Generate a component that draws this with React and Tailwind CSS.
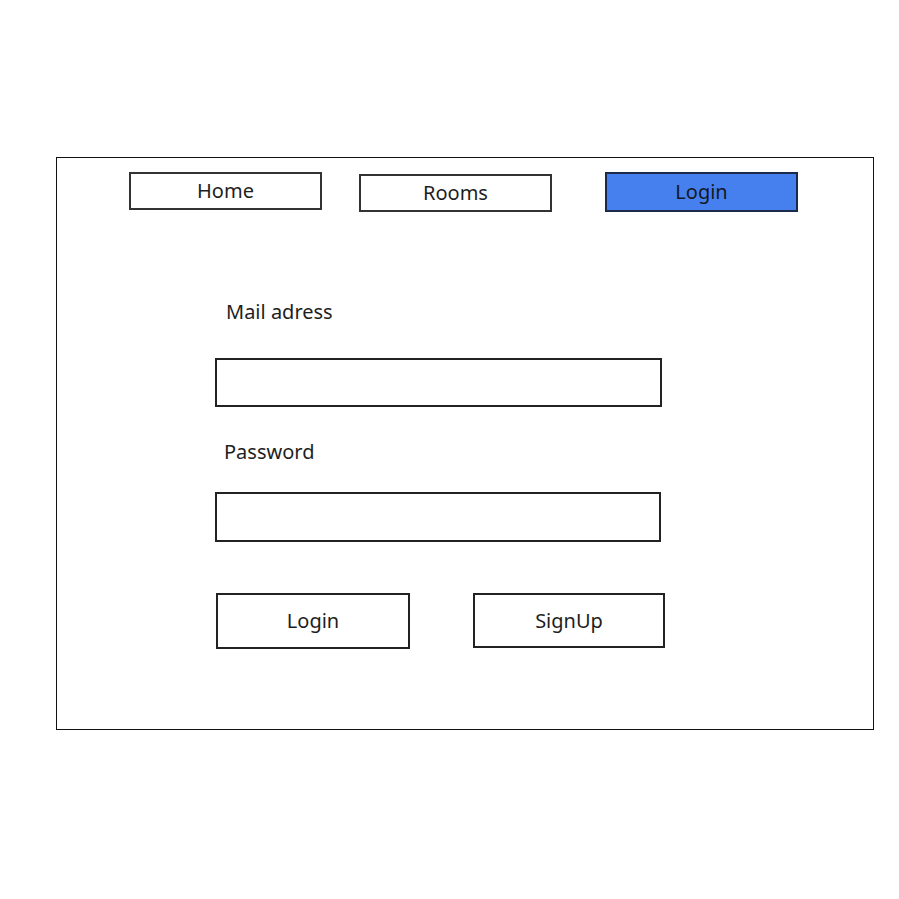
export default function App() {
  return (
    <div className="w-[899px] h-[899px] bg-white text-[#1e1e1e]" style={{ fontFamily: '"Noto Sans", "Open Sans", sans-serif' }}>
      <div className="pt-[157px] pl-[56px]">
        <div className="w-[818px] h-[573px] border border-[#111] flex flex-col">
          {/* NAV */}
          <div className="flex items-start pl-[72px] pt-[14px]">
            <div className="w-[193px] h-[38px] border-2 border-[#333] flex items-center justify-center text-[20px]">
              Home
            </div>
            <div className="ml-[37px] mt-[2px] w-[193px] h-[38px] border-2 border-[#333] flex items-center justify-center text-[20px]">
              Rooms
            </div>
            <div className="ml-[53px] w-[193px] h-[40px] border-2 border-[#1c2a4a] bg-[#4680ee] flex items-center justify-center text-[20px] text-[#14181f]">
              Login
            </div>
          </div>

          {/* FORM */}
          <div className="flex flex-col pl-[158px]">
            <div className="ml-[11px] mt-[85px] h-[30px] leading-[30px] text-[20px]">Mail adress</div>
            <div className="mt-[31px] w-[447px] h-[49px] border-2 border-[#222]" />
            <div className="ml-[9px] mt-[30px] h-[30px] leading-[30px] text-[20px]">Password</div>
            <div className="mt-[25px] w-[446px] h-[50px] border-2 border-[#222]" />
            <div className="flex mt-[51px]">
              <div className="ml-[1px] w-[194px] h-[56px] border-2 border-[#222] flex items-center justify-center text-[20px]">
                Login
              </div>
              <div className="ml-[63px] w-[192px] h-[55px] border-2 border-[#222] flex items-center justify-center text-[20px]">
                SignUp
              </div>
            </div>
          </div>
        </div>
      </div>
    </div>
  );
}
